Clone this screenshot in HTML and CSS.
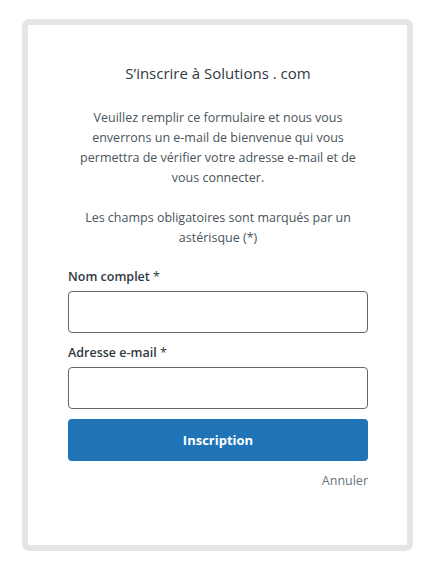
FILE: index.html
```html
<!DOCTYPE html>
<html lang="fr">
<head>
<meta charset="utf-8">
<title>S'inscrire</title>
<link rel="stylesheet" href="styles.css">
</head>
<body>
<div class="card">
  <h1 class="title">S’inscrire à Solutions . com</h1>
  <p class="intro">Veuillez remplir ce formulaire et nous vous enverrons un e-mail de bienvenue qui vous permettra de vérifier votre adresse e-mail et de vous connecter.</p>
  <p class="intro note">Les champs obligatoires sont marqués par un astérisque (*)</p>
  <form class="form">
    <label class="label" for="name">Nom complet <span class="req">*</span></label>
    <input class="input" id="name" type="text">
    <label class="label" for="email">Adresse e-mail <span class="req">*</span></label>
    <input class="input" id="email" type="email">
    <button class="btn" type="button">Inscription</button>
    <a class="cancel" href="#">Annuler</a>
  </form>
</div>
</body>
</html>
```
FILE: styles.css
```css
html, body {
  margin: 0;
  padding: 0;
  background: #fff;
}
body {
  font-family: "Open Sans", "Noto Sans", sans-serif;
  color: #333;
  padding: 19px 0 0 22px;
}
.card {
  box-sizing: border-box;
  width: 391px;
  height: 532px;
  border: 6px solid #e5e5e5;
  border-radius: 7px;
  padding: 0 39px 0 40px;
}
.title {
  margin: 38px 0 0;
  font-size: 15px;
  font-weight: 400;
  line-height: 20px;
  text-align: center;
  color: #2f3941;
}
.intro {
  margin: 25px 0 0;
  font-size: 12.5px;
  line-height: 20px;
  text-align: center;
  color: #49545c;
  padding: 0 8px;
}
.note {
  margin-top: 20px;
}
.form {
  display: flex;
  flex-direction: column;
  margin-top: 19px;
}
.label {
  font-size: 12.5px;
  font-weight: 600;
  line-height: 20px;
  color: #2f3941;
  margin-bottom: 4px;
}
.req {
  font-weight: 400;
}
.input {
  box-sizing: border-box;
  height: 42px;
  border: 1px solid #5f6670;
  border-radius: 4px;
  margin: 0 0 10px;
  padding: 0 10px;
  font: inherit;
}
.btn {
  height: 42px;
  border: 0;
  border-radius: 4px;
  background: #1f73b7;
  color: #fff;
  font-family: inherit;
  font-size: 13px;
  font-weight: 700;
}
.cancel {
  align-self: flex-end;
  margin-top: 10px;
  font-size: 12.5px;
  line-height: 20px;
  color: #68737d;
  text-decoration: none;
}
```
